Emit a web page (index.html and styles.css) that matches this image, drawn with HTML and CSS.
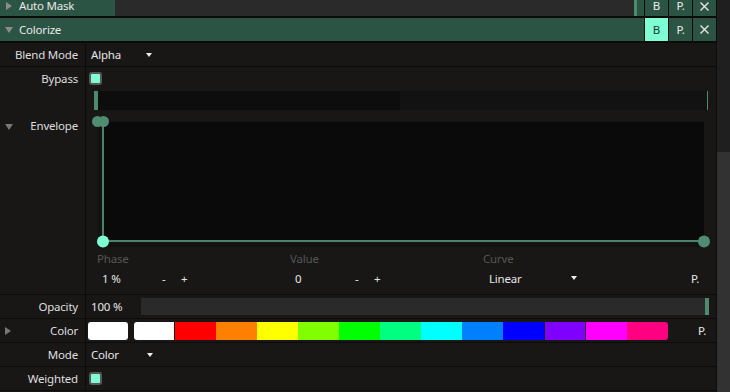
FILE: index.html
```html
<!DOCTYPE html>
<html>
<head>
<meta charset="utf-8">
<link rel="stylesheet" href="styles.css">
</head>
<body>
<div class="app">
  <div class="panel">
    <div class="hdr cut">
      <div class="arr"><span class="tri-r"></span></div>
      <div class="title fixed">Auto Mask</div>
      <div class="hbar"></div>
      <div class="btns">
        <div class="btn">B</div>
        <div class="btn">P.</div>
        <div class="btn"><svg width="9" height="9" viewBox="0 0 9 9"><path d="M0.5 0.5L8.5 8.5M8.5 0.5L0.5 8.5" stroke="#e6e6e6" stroke-width="1.4"/></svg></div>
      </div>
    </div>
    <div class="hdr">
      <div class="arr"><span class="tri-d"></span></div>
      <div class="title">Colorize</div>
      <div class="btns">
        <div class="btn on">B</div>
        <div class="btn">P.</div>
        <div class="btn"><svg width="9" height="9" viewBox="0 0 9 9"><path d="M0.5 0.5L8.5 8.5M8.5 0.5L0.5 8.5" stroke="#e6e6e6" stroke-width="1.4"/></svg></div>
      </div>
    </div>

    <div class="row">
      <div class="lbl">Blend Mode</div>
      <div class="val"><span class="dd w55">Alpha</span><span class="caret"></span></div>
    </div>
    <div class="row nob">
      <div class="lbl">Bypass</div>
      <div class="val pl3"><span class="cb"></span></div>
    </div>
    <div class="row env">
      <div class="lbl top"><span class="la tri-d sm"></span>Envelope</div>
      <div class="envval">
        <div class="rbar"><div class="h"></div><div class="a"></div><div class="b"></div></div>
        <svg class="graph" width="620" height="133" viewBox="0 0 620 133">
          <rect x="6" y="6" width="607" height="126" fill="#121212"/>
          <rect x="12" y="7" width="601" height="119" fill="#0a0a0a"/>
          <line x1="12" y1="7" x2="12" y2="126" stroke="#4b8268" stroke-width="2"/>
          <line x1="12" y1="126" x2="613" y2="126" stroke="#4b8268" stroke-width="2"/>
          <circle cx="6.5" cy="6.5" r="5.5" fill="#4f8c71"/>
          <circle cx="12.5" cy="6.5" r="5.5" fill="#4f8c71"/>
          <circle cx="12" cy="126.5" r="6" fill="#7fffd4"/>
          <circle cx="613" cy="126.5" r="6" fill="#4f8c71"/>
        </svg>
        <div class="ehead">
          <div class="ecol">Phase</div>
          <div class="ecol">Value</div>
          <div class="ecol">Curve</div>
        </div>
        <div class="evals">
          <div class="ecol"><span class="num">1 %</span><span class="pm">-</span><span>+</span></div>
          <div class="ecol"><span class="num">0</span><span class="pm">-</span><span>+</span></div>
          <div class="ecol"><span class="dd w88">Linear</span><span class="caret"></span></div>
          <div class="pbtn">P.</div>
        </div>
      </div>
    </div>
    <div class="row">
      <div class="lbl">Opacity</div>
      <div class="val"><span class="onum">100 %</span><div class="obar"></div></div>
    </div>
    <div class="row">
      <div class="lbl"><span class="la tri-r sm"></span>Color</div>
      <div class="val pl2">
        <div class="sw"></div>
        <div class="spec">
          <div class="seg white" style="width:40px"></div>
          <div class="gap"></div>
          <div class="seg" style="width:41px;background:#ff0000"></div>
          <div class="seg" style="width:41px;background:#ff8000"></div>
          <div class="seg" style="width:41px;background:#ffff00"></div>
          <div class="seg" style="width:41px;background:#80ff00"></div>
          <div class="seg" style="width:41px;background:#00ff00"></div>
          <div class="seg" style="width:41px;background:#00ff80"></div>
          <div class="seg" style="width:41px;background:#00ffff"></div>
          <div class="seg" style="width:41px;background:#0080ff"></div>
          <div class="seg" style="width:41px;background:#0000ff"></div>
          <div class="gap"></div>
          <div class="seg" style="width:40px;background:#8000ff"></div>
          <div class="gap"></div>
          <div class="seg" style="width:41px;background:#ff00ff"></div>
          <div class="seg last" style="width:41px;background:#ff0080"></div>
        </div>
        <div class="cp">P.</div>
      </div>
    </div>
    <div class="row">
      <div class="lbl">Mode</div>
      <div class="val"><span class="dd w56">Color</span><span class="caret"></span></div>
    </div>
    <div class="row">
      <div class="lbl">Weighted</div>
      <div class="val pl3"><span class="cb"></span></div>
    </div>
    <div class="row"></div>
  </div>
  <div class="scroll"><div class="thumb"></div></div>
</div>
</body>
</html>
```
FILE: styles.css
```css
* { box-sizing: border-box; }
body {
  margin: 0;
  background: #181716;
  font-family: "Noto Sans", sans-serif;
  font-size: 11.5px;
  letter-spacing: -0.2px;
  color: #e6e6e6;
  overflow: hidden;
}
.app { display: flex; width: 730px; height: 392px; overflow: hidden; }
.panel {
  width: 717px;
  border-right: 1px solid #0d0d0d;
  display: flex;
  flex-direction: column;
  overflow: hidden;
}
.scroll {
  width: 13px;
  background: #1f1f1f;
  display: flex;
  flex-direction: column;
  justify-content: flex-end;
}
.thumb { height: 240px; background: #323232; }

/* headers */
.hdr {
  flex: none;
  display: flex;
  align-items: center;
  height: 25px;
  background: #2c5445;
  border-bottom: 2px solid #0b0b0b;
}
.hdr.cut { margin-top: -4px; height: 22px; }
.hdr.cut .title, .hdr.cut .btn { line-height: 12px; }
.arr { width: 19px; padding-left: 5px; display: flex; align-items: center; }
.title { flex: 1; color: #e8e8e8; }
.title.fixed { flex: none; width: 96px; }
.hbar {
  flex: 1;
  align-self: stretch;
  margin: 2px 7px 0 0;
  background: #2a2a2a;
  border-right: 3px solid #4d8a70;
}
.btns { display: flex; align-self: stretch; margin-left: auto; }
.btn {
  width: 24px;
  border-left: 1px solid #0b0b0b;
  display: flex;
  align-items: center;
  justify-content: center;
  color: #ececec;
}
.btn.on { background: #7fffd4; color: #1b3a2f; }

.tri-r {
  display: inline-block;
  width: 0; height: 0;
  border-top: 4px solid transparent;
  border-bottom: 4px solid transparent;
  border-left: 6px solid #8c8c8c;
  margin-left: 1px;
}
.tri-d {
  display: inline-block;
  width: 0; height: 0;
  border-left: 4px solid transparent;
  border-right: 4px solid transparent;
  border-top: 6px solid #8c8c8c;
}
.tri-r.sm { border-left-color: #777; }
.tri-d.sm { border-top-color: #777; }

/* rows */
.row {
  flex: none;
  display: flex;
  height: 24px;
  border-bottom: 1px solid #0c0c0c;
}
.row.nob { height: 22px; border-bottom: none; }
.row.env { height: 206px; }
.lbl {
  width: 86px;
  flex: none;
  border-right: 1px solid #0c0c0c;
  display: flex;
  align-items: center;
  justify-content: flex-end;
  padding-right: 7px;
  color: #dedede;
}
.lbl.top { align-items: flex-start; padding-top: 29px; }
.lbl.top .la { margin-top: 6px; }
.la { margin-right: auto; margin-left: 5px; }
.val {
  flex: 1;
  display: flex;
  align-items: center;
  padding-left: 5px;
}
.val.pl3 { padding-left: 3px; }
.val.pl2 { padding-left: 2px; }

.dd { display: inline-block; }
.dd.w55 { width: 55px; }
.dd.w56 { width: 56px; }
.dd.w88 { width: 88px; padding-left: 6px; }
.caret {
  display: inline-block;
  width: 0; height: 0;
  border-left: 3.5px solid transparent;
  border-right: 3.5px solid transparent;
  border-top: 4px solid #eeeeee;
}

.cb {
  display: inline-block;
  width: 13px;
  height: 13px;
  border: 2px solid #585858;
  border-radius: 3px;
  background: #7fffd4;
}

/* envelope */
.envval { flex: 1; display: flex; flex-direction: column; }
.rbar { display: flex; margin: 2px 0 0 8px; width: 614px; height: 19px; }
.rbar .h { width: 4px; background: #4d8a70; }
.rbar .a { width: 302px; background: #0d0d0d; }
.rbar .b { flex: 1; background: #121212; border-right: 1px solid #4d8a70; }
.graph { display: block; margin: 5px 0 0 5px; }
.ehead, .evals {
  display: flex;
  align-items: center;
  height: 20px;
  margin-left: 11px;
}
.ehead { color: #555555; }
.ecol { width: 193px; flex: none; display: flex; align-items: center; }
.num { width: 65px; padding-left: 5px; }
.pm { width: 19px; }
.pbtn { margin-left: 15px; }

/* opacity */
.onum { width: 50px; flex: none; }
.obar {
  flex: 1;
  height: 17px;
  margin-right: 7px;
  background: #2a2a2a;
  border-right: 4px solid #4d8a70;
}

/* color */
.sw { width: 40px; height: 18px; background: #ffffff; border-radius: 3px; margin-right: 6px; }
.spec { display: flex; height: 18px; }
.seg { height: 18px; }
.seg.white { background: #ffffff; border-radius: 3px 0 0 3px; }
.seg.last { border-radius: 0 3px 3px 0; }
.gap { width: 1px; height: 18px; background: #181716; }
.cp { margin-left: 30px; }
```
